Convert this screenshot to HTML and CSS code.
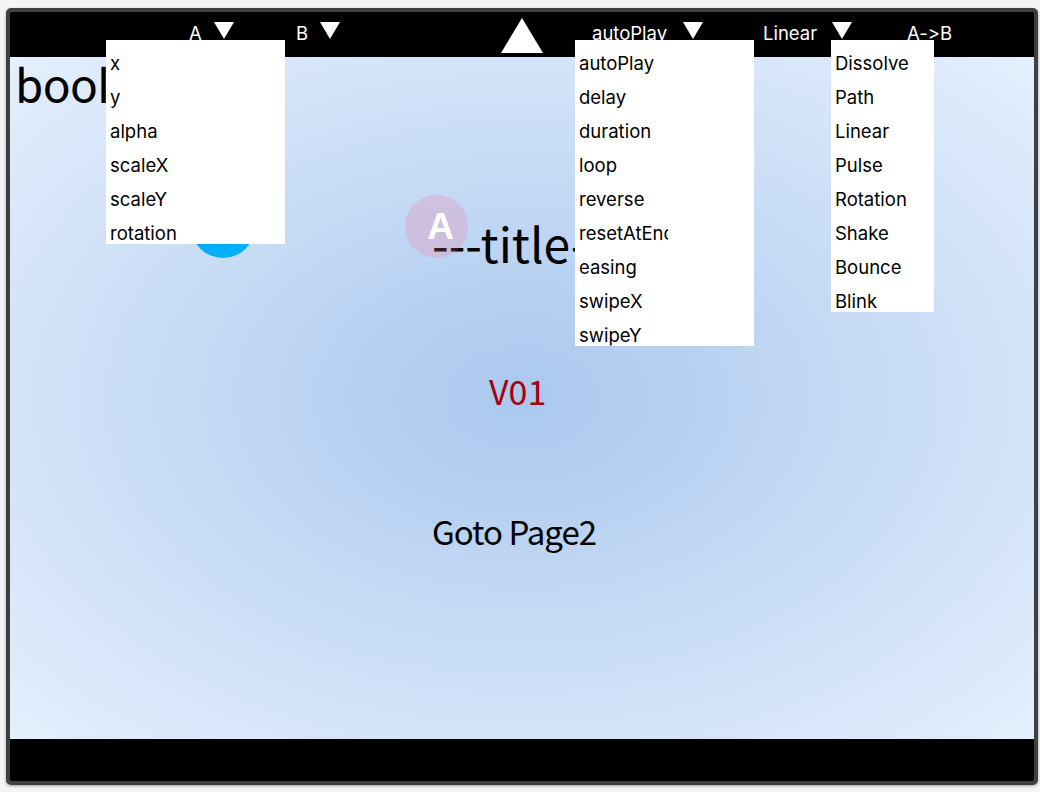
FILE: index.html
```html
<!DOCTYPE html>
<html>
<head>
<meta charset="utf-8">
<link rel="stylesheet" href="styles.css">
</head>
<body>
<div class="frame">
  <div class="topbar">
    <div class="ctrl c1"><span class="label">A</span><svg class="tri" width="20" height="17" viewBox="0 0 20 17"><polygon points="0,0 20,0 10,17" fill="#fff"/></svg></div>
    <div class="ctrl c2"><span class="label">B</span><svg class="tri" width="20" height="17" viewBox="0 0 20 17"><polygon points="0,0 20,0 10,17" fill="#fff"/></svg></div>
    <svg class="up" width="42" height="35" viewBox="0 0 42 35"><polygon points="21,0 42,35 0,35" fill="#fff"/></svg>
    <div class="ctrl c3"><span class="label">autoPlay</span><svg class="tri" width="20" height="17" viewBox="0 0 20 17"><polygon points="0,0 20,0 10,17" fill="#fff"/></svg></div>
    <div class="ctrl c4"><span class="label">Linear</span><svg class="tri" width="20" height="17" viewBox="0 0 20 17"><polygon points="0,0 20,0 10,17" fill="#fff"/></svg></div>
    <div class="ctrl c5"><span class="label">A-&gt;B</span></div>
  </div>
  <div class="stage"></div>
  <div class="bottombar"></div>

  <div class="bool">bool</div>
  <div class="blue-dot"></div>
  <div class="title">---title---</div>
  <div class="badge">A</div>
  <div class="version">V01</div>
  <div class="goto">Goto Page2</div>

  <ul class="menu m1">
    <li>x</li><li>y</li><li>alpha</li><li>scaleX</li><li>scaleY</li><li>rotation</li>
  </ul>
  <ul class="menu m2">
    <li>autoPlay</li><li>delay</li><li>duration</li><li>loop</li><li>reverse</li><li>resetAtEnd</li><li>easing</li><li>swipeX</li><li>swipeY</li>
  </ul>
  <ul class="menu m3">
    <li>Dissolve</li><li>Path</li><li>Linear</li><li>Pulse</li><li>Rotation</li><li>Shake</li><li>Bounce</li><li>Blink</li>
  </ul>
</div>
</body>
</html>
```

FILE: styles.css
```css
html, body {
  margin: 0;
  padding: 0;
}
body {
  background: #f3f4f6;
  width: 1040px;
  height: 792px;
  overflow: hidden;
  font-family: "Inter", "Liberation Sans", sans-serif;
  font-feature-settings: "calt" 0, "liga" 0;
  font-variant-ligatures: none;
}
.frame {
  position: relative;
  margin: 8px 0 0 6px;
  width: 1024px;
  height: 769px;
  border: 4px solid #3f3f3f;
  border-radius: 5px;
  box-shadow: 0 1px 3px rgba(0,0,0,0.35);
  display: flex;
  flex-direction: column;
  overflow: hidden;
}
.topbar {
  height: 45px;
  background: #000;
  display: flex;
  align-items: flex-start;
  padding-top: 10px;
  box-sizing: border-box;
  color: #fff;
  font-size: 18.5px;
  line-height: 22px;
}
.ctrl {
  display: flex;
  justify-content: space-between;
  align-items: flex-start;
}
.ctrl .tri { display: block; }
.c1 { margin-left: 179px; width: 45px; }
.c2 { margin-left: 62px; width: 44px; }
.up { display: block; margin-left: 161px; margin-top: -4px; }
.c3 { margin-left: 49px; width: 111px; }
.c4 { margin-left: 60px; width: 89px; }
.c5 { margin-left: 55px; }
.stage {
  flex: 1;
  background: radial-gradient(ellipse farthest-corner at 50% 50%, #aac8ee 0%, #e5effd 100%);
}
.bottombar {
  height: 42px;
  background: #000;
}
.bool {
  position: absolute;
  left: 6px;
  top: 48px;
  font-family: "Roboto", "Liberation Sans", sans-serif;
  font-weight: 400;
  font-size: 48px;
  line-height: 54px;
  color: #000;
}
.blue-dot {
  position: absolute;
  left: 181px;
  top: 182px;
  width: 64px;
  height: 64px;
  border-radius: 50%;
  background: #00b0f6;
}
.title {
  position: absolute;
  left: 422px;
  top: 206px;
  font-family: "Noto Sans CJK JP", sans-serif;
  font-size: 48px;
  line-height: 48px;
  color: #000;
  white-space: nowrap;
}
.badge {
  position: absolute;
  left: 395px;
  top: 183px;
  width: 63px;
  height: 63px;
  border-radius: 50%;
  background: rgba(250, 110, 150, 0.22);
  display: flex;
  align-items: center;
  justify-content: center;
  padding-left: 8px;
  box-sizing: border-box;
  color: #fff;
  font-family: "Liberation Sans", sans-serif;
  font-weight: bold;
  font-size: 37px;
}
.version {
  position: absolute;
  left: 479px;
  top: 362px;
  font-family: "Noto Sans CJK JP", sans-serif;
  font-size: 34px;
  line-height: 34px;
  color: #a8000c;
}
.goto {
  position: absolute;
  left: 422px;
  top: 502px;
  font-family: "Noto Sans CJK JP", sans-serif;
  font-size: 33px;
  letter-spacing: -1px;
  line-height: 34px;
  color: #000;
  white-space: nowrap;
}
.menu {
  position: absolute;
  top: 28px;
  margin: 0;
  padding: 0;
  list-style: none;
  background: #fff;
  font-size: 18.5px;
  color: #000;
}
.menu li {
  height: 34px;
  box-sizing: border-box;
  padding: 12px 0 0 4px;
  line-height: 22px;
  white-space: nowrap;
  overflow: hidden;
}
.m1 { left: 96px; width: 179px; }
.m2 { left: 565px; width: 179px; }
.m2 li { width: 93px; }
.m3 { left: 821px; width: 103px; }
```
